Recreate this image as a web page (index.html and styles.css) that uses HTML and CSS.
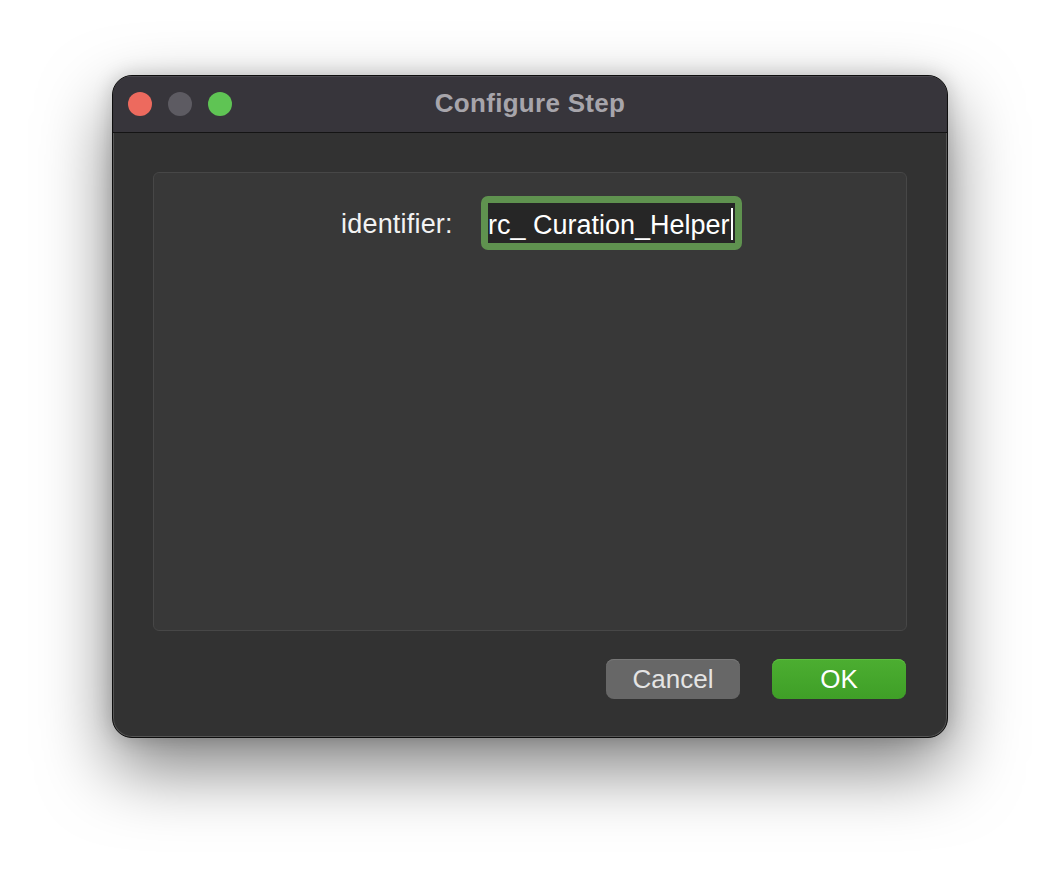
FILE: index.html
```html
<!DOCTYPE html>
<html>
<head>
<meta charset="utf-8">
<link rel="stylesheet" href="styles.css">
</head>
<body>
<div class="window">
  <div class="titlebar">
    <div class="lights">
      <span class="light red"></span>
      <span class="light gray"></span>
      <span class="light green"></span>
    </div>
    <div class="title">Configure Step</div>
  </div>
  <div class="content">
    <div class="panel">
      <div class="row">
        <label class="label">identifier:</label>
        <div class="field-ring">
          <div class="field"><span class="value">rc_ Curation_Helper</span><span class="caret"></span></div>
        </div>
      </div>
    </div>
    <div class="buttons">
      <button class="btn cancel">Cancel</button>
      <button class="btn ok">OK</button>
    </div>
  </div>
</div>
</body>
</html>
```
FILE: styles.css
```css
html, body {
  margin: 0;
  padding: 0;
  background: #ffffff;
}
body {
  width: 1060px;
  height: 886px;
  overflow: hidden;
  font-family: "Liberation Sans", Arial, sans-serif;
}
.window {
  margin: 75px 0 0 112px;
  width: 836px;
  height: 663px;
  box-sizing: border-box;
  border: 1px solid #0e0e0e;
  border-radius: 20px;
  background: #323232;
  box-shadow: inset 0 0 0 1px #555555, 0 30px 70px rgba(0,0,0,0.5), 0 0 20px rgba(0,0,0,0.18);
  display: flex;
  flex-direction: column;
  overflow: hidden;
}
.titlebar {
  position: relative;
  height: 57px;
  flex: none;
  background: #37353b;
  border-bottom: 1px solid #141414;
  box-sizing: border-box;
  display: flex;
  align-items: center;
  justify-content: center;
  box-shadow: inset 0 1px 0 #4a484e;
}
.lights {
  position: absolute;
  left: 15px;
  top: 16px;
  display: flex;
  gap: 16px;
}
.light {
  width: 24px;
  height: 24px;
  border-radius: 50%;
  display: block;
}
.red { background: #ed6a5e; }
.gray { background: #5d5b62; }
.green { background: #5fc454; }
.title {
  color: #a7a5ab;
  font-weight: bold;
  font-size: 26px;
  letter-spacing: 0.3px;
  margin-top: -2px;
}
.content {
  flex: 1;
  padding: 39px 40px 0 40px;
  display: flex;
  flex-direction: column;
}
.panel {
  height: 459px;
  box-sizing: border-box;
  background: #383838;
  border: 1px solid #474747;
  border-radius: 6px;
}
.row {
  display: flex;
  align-items: center;
  padding: 23px 0 0 187px;
}
.label {
  color: #f2f2f2;
  font-size: 27px;
  letter-spacing: 0.2px;
  width: 113px;
  margin-right: 27px;
  padding-top: 3px;
}
.field-ring {
  width: 261px;
  height: 54px;
  box-sizing: border-box;
  border: 7px solid #5f924f;
  border-radius: 7px;
  background: #5f924f;
}
.field {
  height: 40px;
  background: #262626;
  color: #ffffff;
  font-size: 27px;
  line-height: 40px;
  display: flex;
  align-items: center;
  overflow: hidden;
  white-space: nowrap;
}
.value {
  padding-top: 3px;
}
.caret {
  display: inline-block;
  width: 2px;
  height: 32px;
  background: #ffffff;
  margin-left: 1px;
  margin-top: 2px;
}
.buttons {
  display: flex;
  justify-content: flex-end;
  gap: 32px;
  margin-top: 28px;
  padding-right: 1px;
}
.btn {
  width: 134px;
  height: 40px;
  border: none;
  border-radius: 8px;
  font-family: "Liberation Sans", Arial, sans-serif;
  font-size: 26px;
  padding: 0;
  line-height: 40px;
}
.cancel {
  background: #676767;
  color: #e4e4e4;
  box-shadow: inset 0 1px 0 #777777;
}
.ok {
  background: linear-gradient(#4cae31, #3f9f27);
  color: #ffffff;
  box-shadow: inset 0 1px 0 #5cbc40;
}
```
